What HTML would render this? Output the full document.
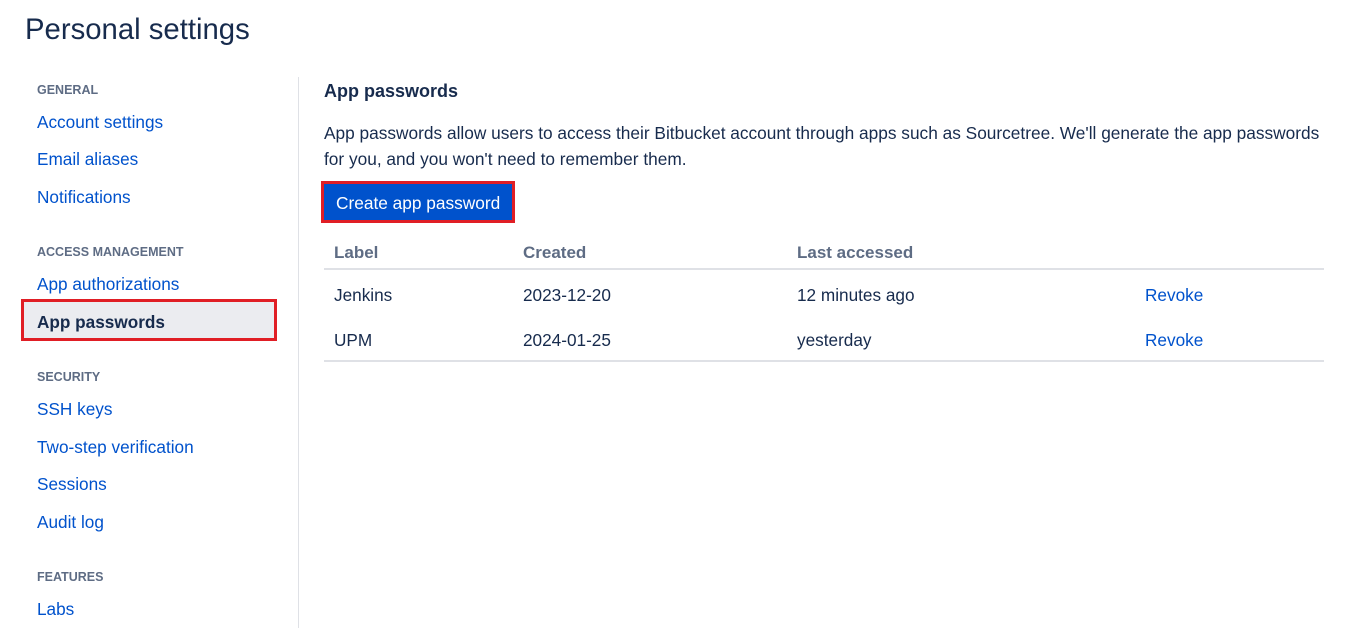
<!DOCTYPE html>
<html><head><meta charset="utf-8"><style>
body{margin:0;width:1351px;height:628px;background:#fff;font-family:"Liberation Sans",sans-serif;color:#172b4d;position:relative;overflow:hidden}
.a{position:absolute;white-space:nowrap}
.h{font-size:12.5px;color:#5e6c84;font-weight:bold;letter-spacing:0}
.l{font-size:17.2px;color:#0052cc}
.t{font-size:17.2px}
.th{font-size:17px;color:#5e6c84;font-weight:bold}
</style></head><body>
<div class="a" style="left:25px;top:13px;font-size:29.3px;color:#172b4d">Personal settings</div>
<div class="a" style="left:298px;top:77px;width:1px;height:551px;background:#dfe1e6"></div>
<div class="a h" style="left:37px;top:83px">GENERAL</div>
<div class="a l" style="left:37px;top:112px">Account settings</div>
<div class="a l" style="left:37px;top:149px">Email aliases</div>
<div class="a l" style="left:37px;top:187px">Notifications</div>
<div class="a h" style="left:37px;top:245px">ACCESS MANAGEMENT</div>
<div class="a l" style="left:37px;top:274px">App authorizations</div>
<div class="a" style="left:21px;top:299px;width:250px;height:36px;border:3px solid #e01e25;background:#ebecf0"></div>
<div class="a t" style="left:37px;top:312px;font-weight:bold;color:#172b4d">App passwords</div>
<div class="a h" style="left:37px;top:370px">SECURITY</div>
<div class="a l" style="left:37px;top:399px">SSH keys</div>
<div class="a l" style="left:37px;top:437px">Two-step verification</div>
<div class="a l" style="left:37px;top:474px">Sessions</div>
<div class="a l" style="left:37px;top:512px">Audit log</div>
<div class="a h" style="left:37px;top:570px">FEATURES</div>
<div class="a l" style="left:37px;top:599px">Labs</div>

<div class="a" style="left:324px;top:81px;font-size:18px;font-weight:bold">App passwords</div>
<div class="a t" style="left:324px;top:120px;line-height:26px;font-size:17.3px">App passwords allow users to access their Bitbucket account through apps such as Sourcetree. We'll generate the app passwords<br>for you, and you won't need to remember them.</div>
<div class="a" style="left:321px;top:181px;width:188px;height:36px;border:3px solid #e01e25;background:#0052cc"></div>
<div class="a" style="left:336px;top:193px;font-size:17.3px;color:#fff">Create app password</div>
<div class="a th" style="left:334px;top:243px">Label</div>
<div class="a th" style="left:523px;top:243px">Created</div>
<div class="a th" style="left:797px;top:243px">Last accessed</div>
<div class="a" style="left:324px;top:268px;width:1000px;height:2px;background:#dfe1e6"></div>
<div class="a t" style="left:334px;top:285px">Jenkins</div>
<div class="a t" style="left:523px;top:285px">2023-12-20</div>
<div class="a t" style="left:797px;top:285px">12 minutes ago</div>
<div class="a l" style="left:1145px;top:285px">Revoke</div>
<div class="a t" style="left:334px;top:330px">UPM</div>
<div class="a t" style="left:523px;top:330px">2024-01-25</div>
<div class="a t" style="left:797px;top:330px">yesterday</div>
<div class="a l" style="left:1145px;top:330px">Revoke</div>
<div class="a" style="left:324px;top:360px;width:1000px;height:2px;background:#dfe1e6"></div>
</body></html>
